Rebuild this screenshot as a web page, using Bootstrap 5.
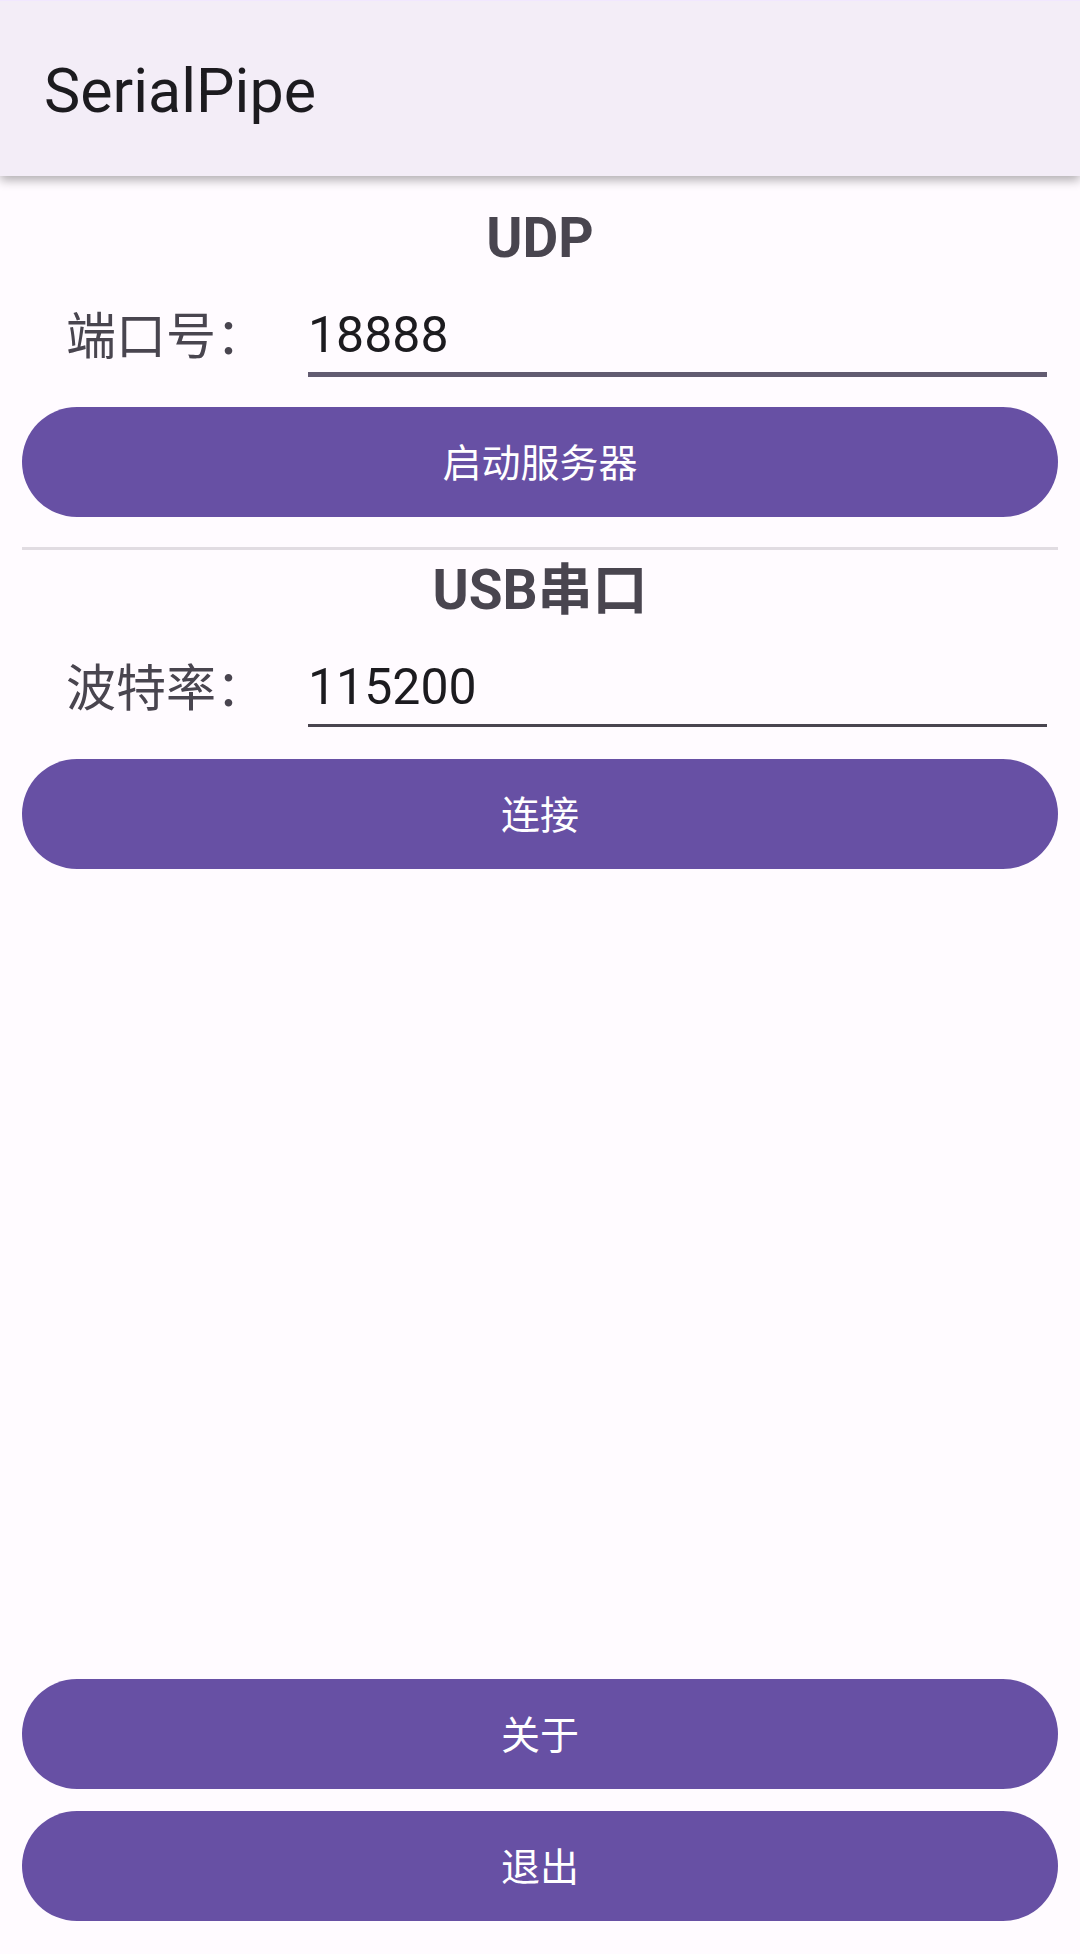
<!DOCTYPE html>
<html lang="zh-CN">
<head>
<meta charset="utf-8">
<meta name="viewport" content="width=device-width, initial-scale=1">
<title>SerialPipe</title>
<link href="https://cdn.jsdelivr.net/npm/bootstrap@5.3.0/dist/css/bootstrap.min.css" rel="stylesheet">
<style>
body{background:#fffbff;color:#49454f;font-family:Roboto,"Noto Sans CJK SC",sans-serif}
.app-bar{background:#f3edf7;color:#1c1b1f;height:176px;padding:4px 44px 0;border-top:1px solid #f1e7ff;box-shadow:0 4px 10px rgba(0,0,0,.32)}
.app-title{font-size:61px;line-height:72px;font-weight:400}
.app-main{padding:22px 22px 33px}
.sect-title{font-size:55px;line-height:80px;font-weight:700}
.field-row{padding:19px 11px 8px 44px}
.field-name{font-size:50px;line-height:80px;width:242px}
.field-box{background:transparent;border:0;border-bottom:3px solid #49454f;border-radius:0;padding:0;height:78px;font-size:50px;line-height:72px;color:#1c1b1f;outline:0;min-width:0}
.field-box.active-box{height:80px;border-bottom:5px solid #625b71}
.pill{background:#6750a4;color:#fff;border:0;border-radius:55px;height:110px;padding:4px 0 0;font-size:39px;line-height:56px}
.field-row + .pill{margin-top:22px}
.pill-stack{gap:22px}
.rule{height:3px;background:#e1dce2;margin:30px 0 0}
</style>
</head>
<body class="min-vh-100 d-flex flex-column">
<header class="app-bar d-flex align-items-center"><h1 class="app-title m-0">SerialPipe</h1></header>
<main class="app-main flex-grow-1 d-flex flex-column">
<section>
<h2 class="sect-title text-center m-0">UDP</h2>
<div class="field-row d-flex align-items-start"><label class="field-name" for="port">端口号：</label><input class="field-box active-box flex-grow-1" id="port" type="text" inputmode="numeric" value="18888"></div>
<button class="pill w-100" type="button">启动服务器</button>
</section>
<div class="rule"></div>
<section>
<h2 class="sect-title text-center m-0">USB串口</h2>
<div class="field-row d-flex align-items-start"><label class="field-name" for="baud">波特率：</label><input class="field-box flex-grow-1" id="baud" type="text" inputmode="numeric" value="115200"></div>
<button class="pill w-100" type="button">连接</button>
</section>
<div class="pill-stack mt-auto d-flex flex-column">
<button class="pill w-100" type="button">关于</button>
<button class="pill w-100" type="button">退出</button>
</div>
</main>
<script src="https://cdn.jsdelivr.net/npm/bootstrap@5.3.0/dist/js/bootstrap.bundle.min.js"></script>
</body>
</html>
